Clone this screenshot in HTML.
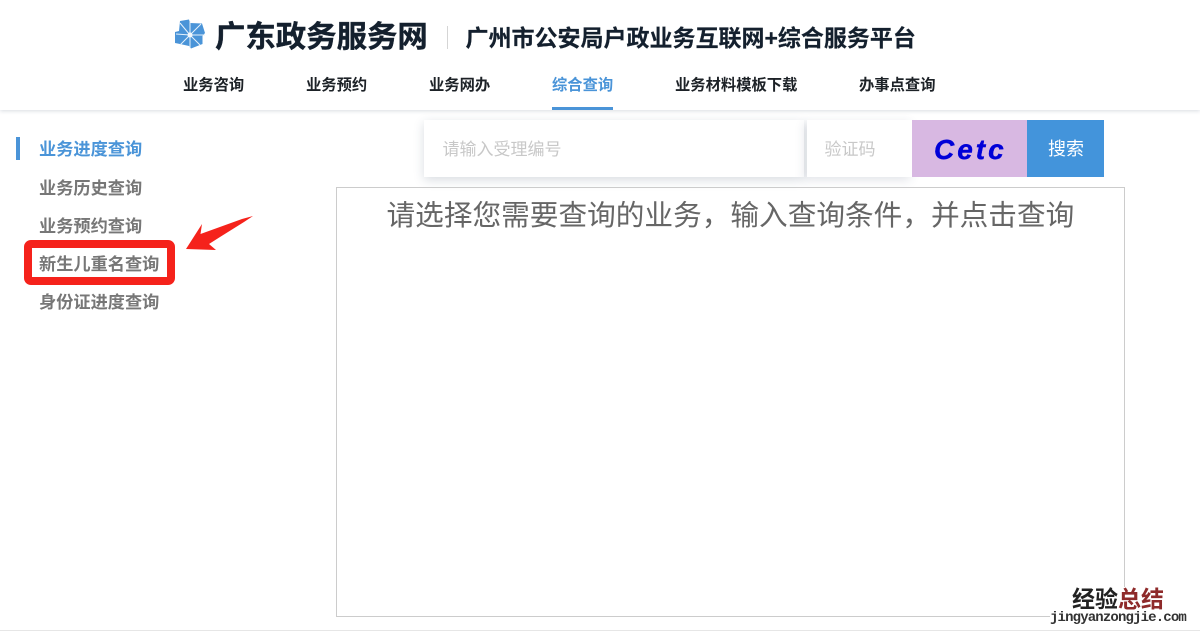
<!DOCTYPE html>
<html lang="zh-CN">
<head>
<meta charset="utf-8">
<title>广东政务服务网</title>
<style>
html,body{margin:0;padding:0;background:#fff}
body{width:1200px;height:636px;position:relative;overflow:hidden;font-family:"Liberation Sans","Noto Sans CJK SC",sans-serif}
.t{position:absolute;white-space:nowrap;line-height:1}
.n{font-size:15.3px;font-weight:700;color:#1d2227;top:78px}
.m{font-size:17.2px;font-weight:700;color:#777;left:39px}
.a{position:absolute}
</style>
</head>
<body>
<div class="a" style="left:0;top:0;width:1200px;height:110px;background:#fff;box-shadow:0 1px 4px rgba(40,60,90,.18)"></div>

<svg class="a" style="left:174px;top:18px" width="32" height="32" viewBox="0 0 32 32">
<path d="M6 3L15 1.500L16 5L28 5.500L31 15L28.500 18L28.500 26L17 30.500L15 28L6 26L1 25L1 14L5 13Z" fill="#4a94d8"/>
<g stroke="#e6f2fb" stroke-width="1" fill="none">
<path d="M16 17L16 3"/>
<path d="M16 17L27 6"/>
<path d="M16 17L31 17"/>
<path d="M16 17L26 27"/>
<path d="M16 17L16 30"/>
<path d="M16 17L6 27"/>
<path d="M16 17L2 16"/>
<path d="M16 17L6 5"/>
</g>
<circle cx="16" cy="17" r="2.500" fill="#f2f8fd"/>
</svg>

<div class="t" style="left:215px;top:22px;font-size:30.4px;font-weight:700;color:#14202e;-webkit-text-stroke:.4px #14202e">广东政务服务网</div>
<div class="a" style="left:447px;top:26px;width:1px;height:23px;background:#d5d5d5"></div>
<div class="t" style="left:465.500px;top:27px;font-size:23px;font-weight:700;color:#14202e;-webkit-text-stroke:.2px #14202e">广州市公安局户政业务互联网+综合服务平台</div>

<div class="t n" style="left:183px">业务咨询</div>
<div class="t n" style="left:306px">业务预约</div>
<div class="t n" style="left:429px">业务网办</div>
<div class="t n" style="left:552px;color:#4a94d8">综合查询</div>
<div class="t n" style="left:675px">业务材料模板下载</div>
<div class="t n" style="left:859px">办事点查询</div>
<div class="a" style="left:552px;top:107px;width:61px;height:3px;background:#4a94d8"></div>

<div class="a" style="left:16px;top:137px;width:4px;height:23px;background:#4a94d8"></div>
<div class="t m" style="top:141px;color:#4a94d8">业务进度查询</div>
<div class="t m" style="top:180px">业务历史查询</div>
<div class="t m" style="top:218px">业务预约查询</div>
<div class="t m" style="top:256px">新生儿重名查询</div>
<div class="t m" style="top:294px">身份证进度查询</div>

<div class="a" style="left:23.500px;top:239.500px;width:151.500px;height:45px;box-sizing:border-box;border:8px solid #f5221b;border-radius:7px"></div>
<svg class="a" style="left:180px;top:205px" width="85" height="60" viewBox="0 0 85 60">
<path d="M6 44L22 19L20.500 29L62 14L73 11L64 17L40 32L29 39L36 45Z" fill="#f5221b"/>
</svg>

<div class="a" style="left:424px;top:120px;width:380px;height:57px;background:#fff;box-shadow:0 3px 10px rgba(40,60,90,.18)"></div>
<div class="a" style="left:807px;top:120px;width:105px;height:57px;background:#fff;box-shadow:-2px 3px 10px rgba(40,60,90,.14)"></div>
<div class="t" style="left:442.500px;top:141px;font-size:17px;color:#c8c8c8">请输入受理编号</div>
<div class="t" style="left:824.500px;top:141px;font-size:17px;color:#c8c8c8">验证码</div>
<div class="a" style="left:912px;top:120px;width:115px;height:57px;background:#d8b8e2"></div>
<div class="t" style="left:934px;top:136px;font-size:28px;font-weight:700;font-style:italic;color:#0000d8;letter-spacing:3px;-webkit-text-stroke:.4px #0000d8">Cetc</div>
<div class="a" style="left:1027px;top:120px;width:77px;height:57px;background:#4394db"></div>
<div class="t" style="left:1048px;top:140px;font-size:18px;color:#fff">搜索</div>

<div class="a" style="left:336px;top:187px;width:789px;height:430px;box-sizing:border-box;border:1px solid #ccc"></div>
<div class="t" style="left:386.500px;top:202px;font-size:28.67px;color:#666">请选择您需要查询的业务，输入查询条件，并点击查询</div>

<div class="a" style="left:0;top:630px;width:1200px;height:1px;background:#e6e6e6"></div>
<div class="a" style="left:1066px;top:586px;width:134px;height:44px;background:#fff"></div>
<div class="a" style="left:1124px;top:570px;width:1px;height:17px;background:#ccc"></div>
<div class="t" style="left:1072px;top:588px;font-size:23px;font-weight:700;color:#222">经验<span style="color:#8e2a2a">总结</span></div>
<div class="t" style="left:1050px;top:611px;font-size:14px;font-weight:700;color:#333;font-family:'Liberation Mono',monospace;letter-spacing:-.85px;background:#fff">jingyanzongjie.com</div>
</body>
</html>
